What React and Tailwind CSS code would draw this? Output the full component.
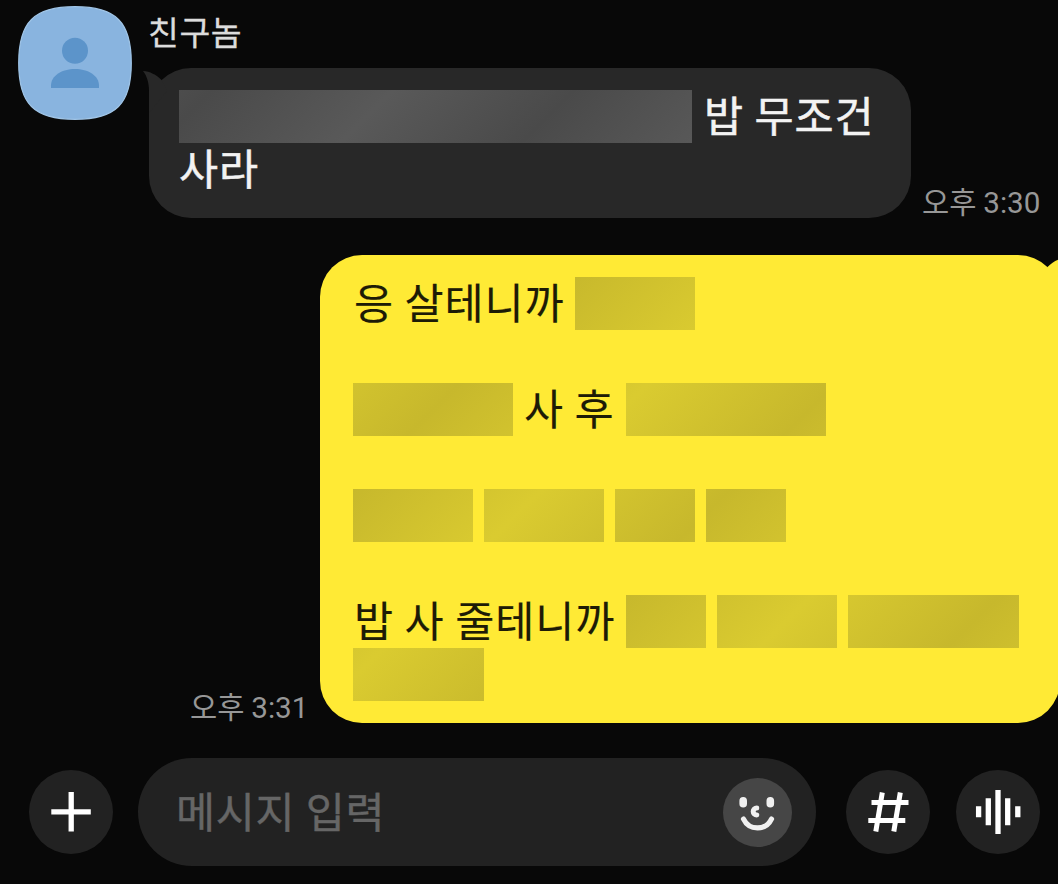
// ─── Chat room ────────────────────────────────────────────────────────────────
// Dark messenger view: one incoming bubble, one outgoing bubble, input bar.

// ── Masked word ───────────────────────────────────────────────────────────────
// The gradient is fixed to the viewport so the sheen runs across all the blocks.

const MASK_TONES = {
  dark: 'bg-[repeating-linear-gradient(135deg,#4a4a4a_-42.5px,#595959_85.5px,#4a4a4a_213.5px)]',
  yellow: 'bg-[repeating-linear-gradient(135deg,#c7b82c_64px,#dacb30_197px,#c7b82c_330px)]',
}

function Mask({ tone = 'yellow', width }) {
  return <span className={`h-[53px] shrink-0 bg-fixed ${MASK_TONES[tone]}`} style={{ width }} />
}

function Line({ children }) {
  return <p className="flex h-[53px] gap-[11px] whitespace-nowrap leading-[48px]">{children}</p>
}

// ── Avatar ────────────────────────────────────────────────────────────────────

function Avatar() {
  return (
    <svg className="h-[114px] w-[114px] shrink-0" viewBox="0 0 114 114" aria-hidden="true">
      <path
        d="M57 .7C98 .7 113.3 16 113.3 57S98 113.3 57 113.3.7 98 .7 57 16 .7 57 .7Z"
        fill="#89b4df"
        stroke="#9fc4e6"
        strokeWidth="1.2"
      />
      <circle cx="57" cy="44.8" r="13" fill="#5c94ca" />
      <path d="M33 82v-2.500C33 69.500 44 63 57 63s24 6.500 24 16.500V82Z" fill="#5c94ca" />
    </svg>
  )
}

// ── Bubbles ───────────────────────────────────────────────────────────────────

function Time({ children }) {
  return (
    <time className="block w-[119px] shrink-0 whitespace-nowrap font-[Roboto,'Noto_Sans_CJK_KR',sans-serif] text-[29.6px] leading-[30px] tracking-normal text-[#979797] [word-spacing:-0.5px]">
      {children}
    </time>
  )
}

function IncomingMessage() {
  return (
    <div className="flex gap-[17px] pl-[18px]">
      <Avatar />
      <div>
        <p className="-ml-px h-[62px] text-[33.5px] leading-[49px] tracking-[0.6px] text-[#dcdcdc] [-webkit-text-stroke:0.3px_currentColor]">친구놈</p>
        <div className="flex items-end gap-[11px]">
          <div className="relative h-[150px] w-[762px] rounded-[42px] bg-[#282828] px-[30px] pt-[22px] text-[#f3f3f3] [-webkit-text-stroke:0.5px_currentColor]">
            <svg className="absolute -left-[6px] top-[3px] h-[42px] w-[24px]" viewBox="0 0 24 42" fill="#282828" aria-hidden="true">
              <path d="M0 0C7 .5 13 3.500 18.500 9L24 20 6 42V20C6 12 4 5 0 0Z" />
            </svg>
            <Line>
              <Mask tone="dark" width={513} />
              <span className="pl-px">밥 무조건</span>
            </Line>
            <Line>사라</Line>
          </div>
          <Time>오후 3:30</Time>
        </div>
      </div>
    </div>
  )
}

function OutgoingMessage() {
  return (
    <div className="flex items-end gap-[11px] pl-[190px]">
      <Time>오후 3:31</Time>
      <div className="relative h-[468px] w-[740px] shrink-0 rounded-[42px] bg-[#ffea35] pl-[33px] pt-[22px] text-[#1d1b06] [-webkit-text-stroke:0.15px_currentColor]">
        <svg className="absolute -right-[6px] top-[3px] h-[42px] w-[24px]" viewBox="0 0 24 42" fill="#ffea35" aria-hidden="true">
          <path d="M24 0C17 .5 11 3.500 5.500 9L0 20 18 42V20C18 12 20 5 24 0Z" />
        </svg>
        <Line>
          <span className="w-[211px] pl-px">응 살테니까</span>
          <Mask width={120} />
        </Line>
        <Line />
        <Line>
          <Mask width={160} />
          <span className="w-[91px]">사 후</span>
          <Mask width={200} />
        </Line>
        <Line />
        <Line>
          <Mask width={120} />
          <Mask width={120} />
          <Mask width={80} />
          <Mask width={80} />
        </Line>
        <Line />
        <Line>
          <span className="w-[262px] pl-px">밥 사 줄테니까</span>
          <Mask width={80} />
          <Mask width={120} />
          <Mask width={171} />
        </Line>
        <Line>
          <Mask width={131} />
        </Line>
      </div>
    </div>
  )
}

// ── Input bar ─────────────────────────────────────────────────────────────────

function RoundButton({ label, children }) {
  return (
    <button aria-label={label} className="h-[84px] w-[84px] shrink-0 rounded-full bg-[#222222] text-white">
      <svg className="h-[84px] w-[84px]" viewBox="0 0 84 84" fill="none" stroke="currentColor" strokeWidth="5.300">
        {children}
      </svg>
    </button>
  )
}

function InputBar() {
  return (
    <div className="flex items-center pl-[29px]">
      <RoundButton label="첨부">
        <path d="M42.200 22v39.500M22.300 41.800h39.500" />
      </RoundButton>

      <div className="ml-[25px] flex h-[108px] w-[678px] shrink-0 items-center justify-between rounded-full bg-[#222222] pl-[38px] pr-6">
        <span className="pb-[5px] tracking-[0.7px] text-[#666666] [-webkit-text-stroke:0.4px_currentColor]">메시지 입력</span>
        <svg className="h-[69px] w-[69px]" viewBox="0 0 69 69" fill="none" stroke="#f0f0f0" strokeLinecap="round" aria-label="이모티콘">
          <circle cx="34.500" cy="34.500" r="34.500" fill="#464646" stroke="none" />
          <path d="M20.200 22.800v3M47.300 22.800v3" strokeWidth="7.600" />
          <path d="M33.800 29.900a3.600 3.600 0 0 0 0 7.200" strokeWidth="5" />
          <path d="M20.500 41c5.500 11.800 22.500 11.800 28 0" strokeWidth="5.200" />
        </svg>
      </div>

      <div className="ml-[30px] flex gap-[26px]">
        <RoundButton label="샵 검색">
          <path d="M36.300 22.500l-6.500 39M54.300 22.500l-6.500 39M25.500 32.500h37M22.300 50.500h37" strokeWidth="5" />
        </RoundButton>
        <RoundButton label="음성">
          <path d="M42 20v44M32.300 28.300v27M51.700 28.300v27M22.600 36.300v11M61.800 36.300v11" />
        </RoundButton>
      </div>
    </div>
  )
}

// ── Page ──────────────────────────────────────────────────────────────────────

export default function App() {
  return (
    <main className="flex h-[884px] w-[1058px] flex-col overflow-hidden bg-[#080808] pt-[6px] font-['Noto_Sans_CJK_KR',sans-serif] text-[42.5px] leading-[53px] tracking-[0.9px] [word-spacing:0.2px]">
      <IncomingMessage />
      <div className="mt-[37px]">
        <OutgoingMessage />
      </div>
      <div className="mt-[35px]">
        <InputBar />
      </div>
    </main>
  )
}
